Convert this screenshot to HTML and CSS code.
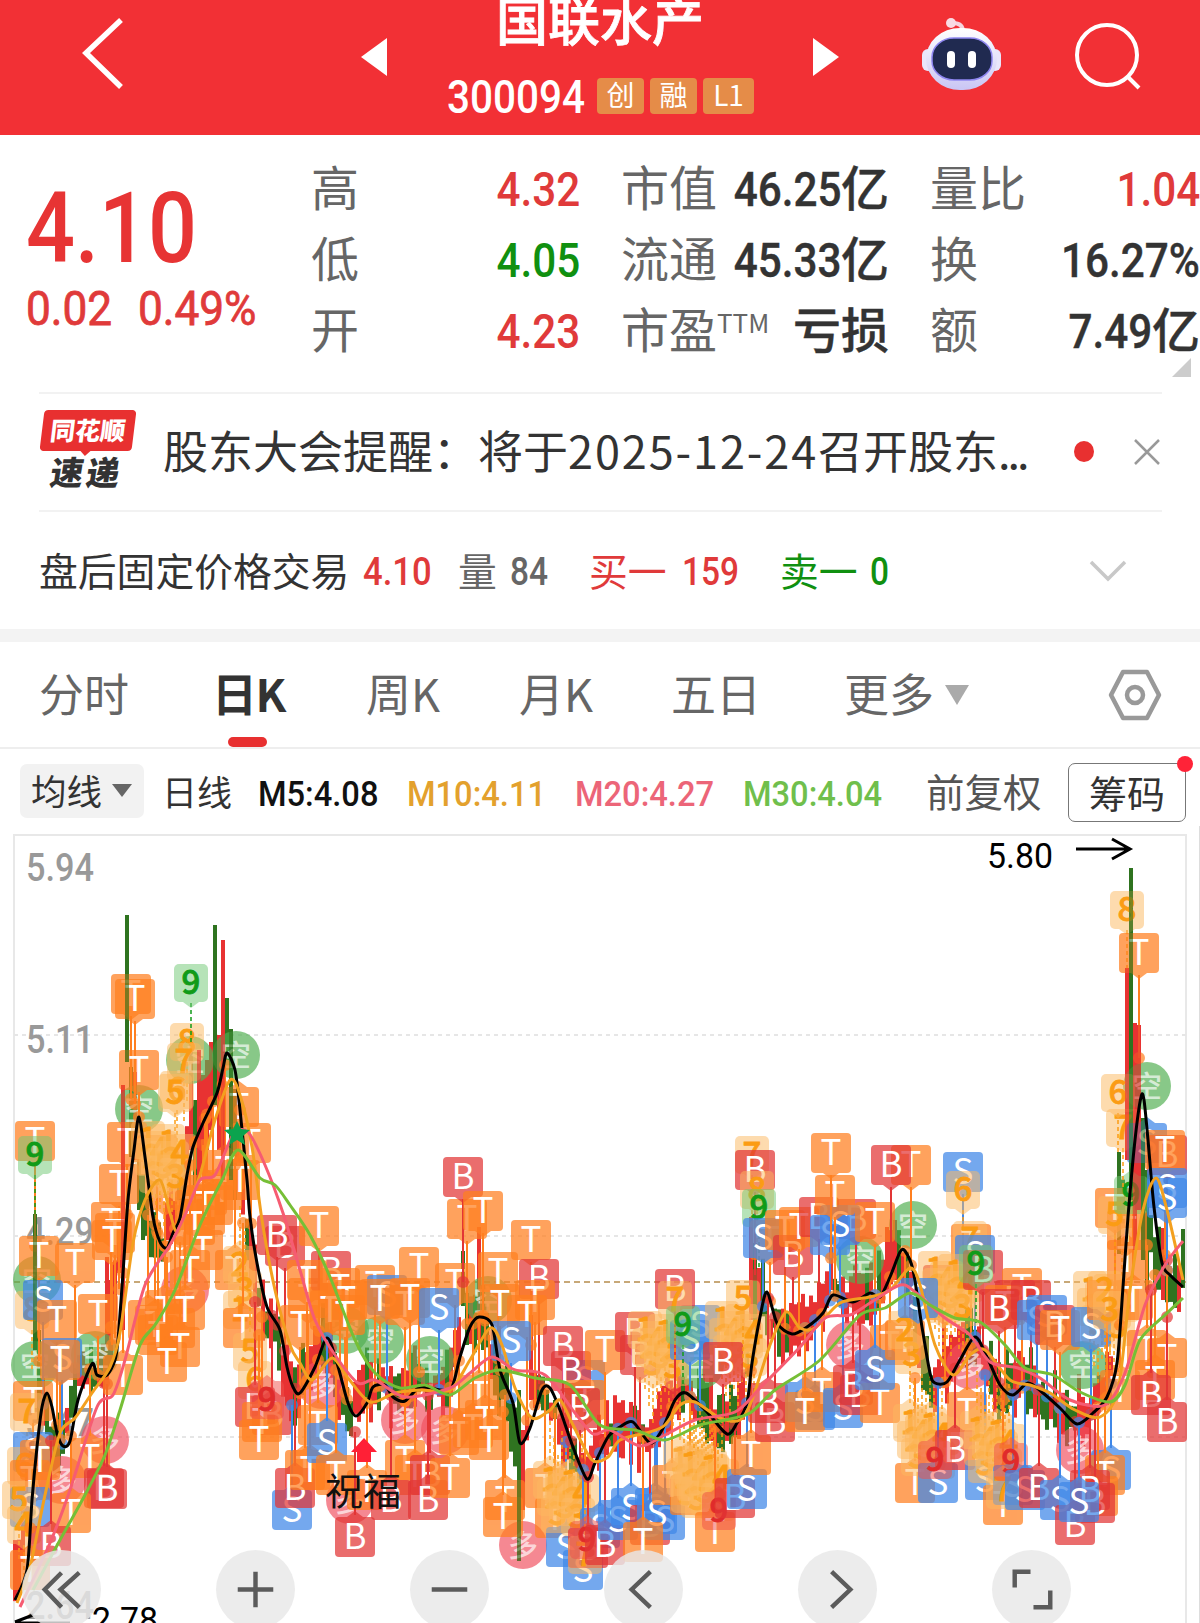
FILE: index.html
```html
<!DOCTYPE html>
<html lang="zh-CN">
<head>
    <meta charset="UTF-8">
    <meta name="viewport" content="width=device-width, initial-scale=1.0">
    <title>国联水产 300094</title>
    <link rel="stylesheet" href="styles.css">
</head>
<body>

    <header class="header">
        <svg class="back" width="44" height="76" viewBox="0 0 44 76"><path d="M40 4 L5 37 L40 71" fill="none" stroke="#fff" stroke-width="5.500"/></svg>
        <svg class="prev" width="26" height="38" viewBox="0 0 26 38"><path d="M26 0 V38 L0 19 Z" fill="#fff"/></svg>
        <div class="title">
            <h1>国联水产</h1>
            <div class="code">
                <span class="num">300094</span>
                <b>创</b><b>融</b><b class="level">L1</b>
            </div>
        </div>
        <svg class="next" width="26" height="38" viewBox="0 0 26 38"><path d="M0 0 V38 L26 19 Z" fill="#fff"/></svg>
        <svg class="robot" width="80" height="76" viewBox="0 0 80 76">
            <defs>
                <linearGradient id="shell" x1="0" y1="0" x2="0" y2="1">
                    <stop offset="0" stop-color="#fff"/>
                    <stop offset="1" stop-color="#c9c5f4"/>
                </linearGradient>
            </defs>
            <path d="M41 16 Q41 7 31 7" fill="none" stroke="#f6d5df" stroke-width="4"/>
            <circle cx="29" cy="7" r="5" fill="#f9dbe4"/>
            <rect x="0" y="33" width="12" height="22" rx="6" fill="#e9e6fb"/>
            <rect x="67" y="33" width="12" height="22" rx="6" fill="#e9e6fb"/>
            <rect x="4" y="12" width="71" height="62" rx="34" ry="31" fill="url(#shell)"/>
            <rect x="10" y="22" width="60" height="42" rx="22" ry="19" fill="#202a50" stroke="#8e86f0" stroke-width="1.500"/>
            <rect x="25" y="35" width="8" height="17" rx="4" fill="#fff"/>
            <rect x="46" y="35" width="8" height="17" rx="4" fill="#fff"/>
        </svg>
        <svg class="search" width="70" height="70" viewBox="0 0 70 70"><g fill="none" stroke="#fff" stroke-width="4"><circle cx="34" cy="34" r="30"/><path d="M54 55 L66 67"/></g></svg>
    </header>

    <section class="quote">
        <div class="price">
            <div class="last num">4.10</div>
            <div class="change"><span class="num">0.02</span><span class="num">0.49%</span></div>
        </div>
        <dl class="stats">
            <div><dt>高</dt><dd class="up"><span class="num">4.32</span></dd></div>
            <div><dt>市值</dt><dd><span class="num">46.25</span>亿</dd></div>
            <div><dt>量比</dt><dd class="up"><span class="num">1.04</span></dd></div>
            <div><dt>低</dt><dd class="down"><span class="num">4.05</span></dd></div>
            <div><dt>流通</dt><dd><span class="num">45.33</span>亿</dd></div>
            <div><dt>换</dt><dd><span class="num">16.27%</span></dd></div>
            <div><dt>开</dt><dd class="up"><span class="num">4.23</span></dd></div>
            <div><dt>市盈<sup>TTM</sup></dt><dd>亏损</dd></div>
            <div><dt>额</dt><dd><span class="num">7.49</span>亿</dd></div>
        </dl>
        <i class="corner"></i>
    </section>

    <section class="news">
        <div class="brand"><span>同花顺</span><em>速递</em></div>
        <p>股东大会提醒：将于<span class="date">2025-12-24</span>召开股东<span class="dots">...</span></p>
        <i class="dot"></i>
        <svg width="26" height="26" viewBox="0 0 26 26"><path d="M1 1 L25 25 M25 1 L1 25" stroke="#999" stroke-width="2.500"/></svg>
    </section>

    <section class="after">
        <span class="name">盘后固定价格交易</span>
        <span class="num up p">4.10</span>
        <span class="gray vol">量</span><span class="num gray volnum">84</span>
        <span class="up buy">买一</span><span class="num up buynum">159</span>
        <span class="down sell">卖一</span><span class="num down">0</span>
        <svg width="38" height="22" viewBox="0 0 38 22"><path d="M2 2 L19 19 L36 2" fill="none" stroke="#c8c8c8" stroke-width="3.500"/></svg>
    </section>

    <nav class="tabs">
        <a>分时</a>
        <a class="active">日K</a>
        <a>周K</a>
        <a>月K</a>
        <a>五日</a>
        <a>更多</a>
        <i class="caret"></i>
        <svg width="54" height="52" viewBox="0 0 54 52"><g fill="none" stroke="#999" stroke-width="4.500" stroke-linejoin="round"><path d="M15 3 H39 L51 26 L39 49 H15 L3 26 Z"/><circle cx="27" cy="26" r="8"/></g></svg>
    </nav>

    <section class="legend">
        <span class="picker"><span>均线</span><i></i></span>
        <span class="line">日线</span>
        <span class="num ma ma5">M5:4.08</span>
        <span class="num ma ma10">M10:4.11</span>
        <span class="num ma ma20">M20:4.27</span>
        <span class="num ma ma30">M30:4.04</span>
        <span class="adjust">前复权</span>
        <span class="chips">筹码<i></i></span>
    </section>

    <section class="chart">
        <svg id="kline" width="1200" height="797" viewBox="0 826 1200 797"></svg>
        <div class="controls">
            <button><svg viewBox="0 0 80 80"><path d="M40 23 L23 40 L40 58 M58 23 L39 40 L58 58"/></svg></button>
            <button><svg viewBox="0 0 80 80"><path d="M22 40 H58 M40 22 V58"/></svg></button>
            <button><svg viewBox="0 0 80 80"><path d="M22 40 H58"/></svg></button>
            <button><svg viewBox="0 0 80 80"><path d="M47 22 L28 40 L47 58"/></svg></button>
            <button><svg viewBox="0 0 80 80"><path d="M34 22 L53 40 L34 58"/></svg></button>
            <button><svg viewBox="0 0 80 80"><path d="M23 38 V22 H39 M42 58 H59 V41"/></svg></button>
        </div>
    </section>

    <script src="chart.js"></script>
</body>
</html>
```
FILE: styles.css
```css
* {
    box-sizing: border-box;
}

body {
    margin: 0;
    width: 1200px;
    height: 1623px;
    overflow: hidden;
    background: #fff;
    color: #333;
    font-family: "Noto Sans CJK SC", sans-serif;
}

svg {
    display: block;
    flex: none;
}

/* narrow figures */
.num {
    display: inline-block;
    font-family: Roboto, "Noto Sans CJK SC", sans-serif;
    font-weight: 500;
    transform: scaleX(0.88);
    transform-origin: left center;
    white-space: nowrap;
}

.up { color: #e03a3a; }
.down { color: #109010; }
.gray { color: #666; }

.header {
    width: 1200px;
    height: 135px;
    background: #f23035;
    display: flex;
    align-items: flex-start;
    color: #fff;
}

.back { margin: 16px 0 0 81px; }
.prev { margin: 38px 0 0 236px; }

.title {
    width: 426px;
    padding-left: 60px;
}

.title h1 {
    margin: -10px 0 0 49px;
    font-size: 52px;
    line-height: 58px;
    font-weight: 500;
    -webkit-text-stroke: 0.8px;
    white-space: nowrap;
}

.code {
    display: flex;
    align-items: center;
    gap: 6px;
    margin-top: 28px;
    height: 40px;
}

.code .num {
    width: 144px;
    padding-top: 2px;
    font-size: 46px;
}

.code b {
    width: 47px;
    height: 36px;
    border-radius: 4px;
    background: #e58c48;
    font-size: 28px;
    line-height: 33px;
    font-weight: 400;
    text-align: center;
}

.code .level { width: 51px; }
.next { margin: 38px 0 0 0; }
.robot { margin: 16px 0 0 83px; }
.search { margin: 21px 0 0 71px; }

.quote {
    position: relative;
    display: flex;
    height: 257px;
}

.price {
    width: 311px;
    padding: 36px 0 0 26px;
    color: #e73434;
}

.last {
    font-size: 98px;
    line-height: 116px;
}

.change {
    display: flex;
    margin-top: -6px;
    font-size: 48px;
    line-height: 56px;
    color: #e03a3a;
}

.change .num {
    width: 112px;
    font-weight: 400;
    -webkit-text-stroke: 0.8px;
    transform: scaleX(0.92);
}

.stats {
    display: grid;
    grid-template-columns: 269px 268px 270px;
    grid-auto-rows: 71px;
    column-gap: 41px;
    margin: 16px 0 0;
    font-size: 48px;
    line-height: 71px;
}

.stats div {
    display: flex;
    justify-content: space-between;
    white-space: nowrap;
}

.stats dt { margin-top: -1px; color: #666; }
.stats dd { margin: -1px 0 0; font-weight: 500; }
.stats dd:not(.up):not(.down) { -webkit-text-stroke: 0.4px; }
.stats .num { transform-origin: right center; }

.stats sup {
    font-size: 26px;
    line-height: 0;
    vertical-align: 15px;
}

.corner {
    position: absolute;
    right: 9px;
    top: 223px;
    border-left: 19px solid transparent;
    border-bottom: 19px solid #ccc;
}

.news {
    display: flex;
    align-items: center;
    margin: 0 38px 0 39px;
    height: 120px;
    border-top: 2px solid #f2f2f2;
    border-bottom: 2px solid #f2f2f2;
}

.brand {
    width: 125px;
    margin-top: -3px;
    font-weight: 900;
}

.brand span {
    position: relative;
    display: block;
    width: 92px;
    height: 41px;
    margin-left: 3px;
    background: #e83030;
    border-radius: 4px;
    color: #fff;
    font-size: 25px;
    line-height: 38px;
    text-align: center;
    transform: skewX(-7deg);
}

.brand span::after {
    content: "";
    position: absolute;
    left: 40px;
    top: 40px;
    border: 6px solid transparent;
    border-top-color: #e83030;
}

.brand em {
    display: block;
    margin-left: 12px;
    font-size: 33px;
    line-height: 40px;
    letter-spacing: 3px;
    font-style: normal;
    transform: skewX(-9deg);
}

.news p {
    width: 911px;
    margin: -5px 0 0 -1px;
    font-size: 45px;
    white-space: nowrap;
}

.date { letter-spacing: 1.900px; }
.dots { letter-spacing: -3px; }

.dot {
    width: 20px;
    height: 21px;
    margin: -1px 40px 0 0;
    border-radius: 50%;
    background: #e83030;
}

.after {
    display: flex;
    align-items: center;
    height: 117px;
    padding-left: 39px;
    font-size: 38.800px;
    white-space: nowrap;
}

.after > span:not(.num) { margin-top: -4px; }
.after .num { margin-top: 2px; font-size: 38px; }
.name { width: 324px; }
.after .p { width: 95px; transform: scaleX(0.91); }
.vol { width: 52px; }
.after .volnum { width: 79px; }
.buy { width: 93px; }
.after .buynum { width: 98px; }
.sell { width: 90px; }
.after svg { margin-left: 197px; }

.tabs {
    display: flex;
    align-items: center;
    width: 1200px;
    height: 120px;
    border-top: 13px solid #f3f3f3;
    border-bottom: 2px solid #eee;
    padding-left: 39px;
    font-size: 45px;
    color: #666;
    white-space: nowrap;
}

.tabs a { width: 173px; height: 105px; line-height: 101px; }
.tabs a:nth-child(2) { width: 154px; }
.tabs a:nth-child(3) { width: 153px; }
.tabs a:nth-child(4) { width: 152px; }
.tabs a:nth-child(6) { width: 101px; }

.tabs .active {
    position: relative;
    color: #333;
    font-weight: 700;
    letter-spacing: -1.500px;
}

.active::after {
    content: "";
    position: absolute;
    left: 16px;
    bottom: 0;
    width: 39px;
    height: 10px;
    border-radius: 5px;
    background: #e83030;
}

.caret {
    border: 12px solid transparent;
    border-top: 20px solid #aaa;
    border-bottom: 0;
}

.tabs svg { margin-left: 139px; }

.legend {
    display: flex;
    align-items: center;
    height: 77px;
    padding: 6px 0 0 20px;
    white-space: nowrap;
}

.picker {
    display: flex;
    align-items: center;
    width: 124px;
    height: 54px;
    margin-right: 18px;
    padding-left: 11px;
    border-radius: 7px;
    background: #f2f2f2;
    font-size: 35.500px;
}

.picker span { margin-top: -3px; }

.picker i {
    margin-left: 10px;
    border: 10px solid transparent;
    border-top: 13px solid #666;
    border-bottom: 0;
}

.line { width: 96px; font-size: 35px; }
.legend .ma { margin-top: 7px; font-size: 35.500px; transform: scaleX(0.92); }
.ma5 { width: 149px; color: #111; }
.ma10 { width: 168px; color: #e3a12d; }
.ma20 { width: 168px; color: #ec6578; }
.ma30 { width: 183px; color: #70bf4c; }
.adjust { width: 142px; margin-top: -2px; font-size: 38.500px; color: #555; }

.chips {
    position: relative;
    width: 118px;
    height: 59px;
    margin-top: 3px;
    border: 1.500px solid #777;
    border-radius: 7px;
    font-size: 38px;
    line-height: 55px;
    text-align: center;
}

.chips i {
    position: absolute;
    right: -8px;
    top: -8px;
    width: 16px;
    height: 16px;
    border-radius: 50%;
    background: #ff2338;
}

.chart {
    position: relative;
    width: 1200px;
    height: 797px;
}

.controls {
    position: absolute;
    left: 22px;
    top: 724px;
    display: flex;
    gap: 115px;
}

.controls button {
    width: 79px;
    height: 79px;
    padding: 0;
    border: 0;
    border-radius: 50%;
    background: rgba(232, 232, 232, 0.82);
}

.controls path {
    fill: none;
    stroke: #5b5b5b;
    stroke-width: 4.500;
}

.axis { font: 500 39px Roboto, sans-serif; fill: #999; }
.peak { font: 400 35px Roboto, sans-serif; fill: #000; }
.mark { font: 400 35px "Noto Sans CJK SC", sans-serif; text-anchor: middle; }
.nine { font: 500 33px "Noto Sans CJK SC", sans-serif; text-anchor: middle; stroke-width: 0.8; }
.round { font: 500 30px "Noto Sans CJK SC", sans-serif; text-anchor: middle; }
.bless { font: 400 38px "Noto Sans CJK SC", sans-serif; fill: #111; }
```
FILE: chart.js
```js
// moving averages: x,y pairs
const MA5 = "15,1600 27,1570 32,1500 37,1447 42,1407 47,1393 52,1407 57,1433 63,1446 70,1441 78,1400 92,1364 97,1375 107,1375 115,1360 118,1340 123,1273 128,1200 134,1150 139,1117 145,1157 153,1217 160,1242 167,1248 173,1233 180,1218 187,1175 193,1147 203,1123 217,1093 223,1068 227,1053 235,1070 240,1110 247,1180 250,1217 257,1263 267,1307 280,1330 287,1367 293,1387 300,1393 315,1367 327,1338 337,1363 348,1403 356,1416 367,1403 373,1387 385,1385 393,1397 405,1401 420,1387 440,1390 452,1387 460,1357 470,1327 479,1317 492,1325 500,1370 513,1403 520,1443 530,1428 542,1390 550,1388 560,1410 573,1447 587,1479 595,1463 608,1437 620,1427 633,1422 650,1443 662,1430 675,1400 686,1393 707,1412 727,1434 737,1423 747,1403 752,1363 760,1317 767,1292 777,1323 792,1334 807,1327 823,1313 833,1295 853,1302 870,1293 880,1297 890,1277 900,1252 905,1251 913,1270 922,1327 930,1373 935,1383 947,1382 960,1360 975,1337 987,1357 1000,1385 1013,1395 1028,1383 1043,1393 1060,1408 1077,1424 1093,1413 1107,1397 1117,1363 1123,1287 1128,1217 1135,1140 1141,1097 1144,1100 1148,1140 1154,1207 1162,1263 1170,1275 1183,1287";
const MA10 = "17,1603 30,1567 45,1495 60,1433 75,1418 92,1393 110,1367 120,1333 133,1243 145,1200 160,1180 170,1213 177,1232 187,1210 200,1175 215,1120 230,1080 240,1095 252,1147 262,1220 275,1290 290,1345 300,1363 312,1380 332,1358 348,1378 370,1402 395,1393 420,1390 450,1390 470,1360 490,1328 502,1345 515,1388 532,1418 550,1410 560,1400 573,1425 592,1460 608,1457 620,1440 650,1432 665,1425 680,1405 695,1402 720,1418 740,1420 752,1400 770,1345 786,1312 800,1328 815,1328 840,1303 870,1297 890,1290 910,1268 920,1285 935,1345 953,1375 970,1355 985,1350 1010,1380 1030,1385 1050,1393 1075,1410 1100,1417 1118,1390 1130,1290 1143,1210 1156,1178 1167,1210 1183,1280";
const MA20 = "20,1607 50,1543 70,1490 97,1407 113,1395 125,1360 145,1285 170,1245 185,1215 200,1180 215,1175 233,1135 248,1132 265,1165 283,1213 300,1270 315,1320 335,1355 358,1383 375,1380 405,1397 450,1388 470,1373 492,1357 515,1370 545,1375 575,1413 593,1434 610,1430 640,1446 665,1435 695,1420 735,1412 760,1388 800,1347 825,1318 850,1315 870,1303 900,1285 915,1292 945,1318 970,1335 990,1362 1018,1368 1040,1378 1070,1400 1105,1405 1125,1373 1145,1305 1165,1265 1183,1241";
const MA30 = "33,1590 60,1540 85,1495 105,1455 120,1410 140,1345 155,1325 175,1290 200,1225 222,1180 238,1150 260,1178 275,1185 290,1205 310,1235 330,1277 355,1340 375,1373 400,1388 425,1385 450,1395 475,1378 500,1370 535,1378 570,1385 600,1425 635,1430 665,1440 700,1425 725,1420 750,1413 775,1390 820,1360 860,1315 885,1308 910,1293 930,1305 955,1318 980,1322 1005,1345 1025,1368 1053,1375 1080,1392 1110,1402 1125,1385 1140,1340 1165,1315 1183,1298";

// outstanding candles: x, top, bottom, colour
const SPIKES = [
    [35, 1214, 1350, "g"], [39, 1330, 1420, "g"], [107, 1257, 1380, "r"], [111, 1280, 1370, "r"],
    [123, 1085, 1330, "r"], [131, 1067, 1157, "g"], [135, 1072, 1160, "r"], [139, 1143, 1210, "g"], [143, 1174, 1240, "g"], [127, 915, 1062, "g"],
    [191, 1045, 1150, "r"], [195, 1100, 1200, "g"], [199, 1050, 1180, "r"], [203, 1075, 1170, "r"], [207, 1060, 1150, "r"], [211, 1042, 1130, "r"], [219, 1035, 1150, "r"], [223, 940, 1180, "r"],
    [227, 998, 1060, "g"], [231, 1029, 1180, "g"], [235, 1089, 1200, "g"], [215, 925, 1105, "g"],
    [463, 1251, 1306, "g"], [479, 1227, 1340, "r"], [483, 1285, 1350, "g"], [467, 1293, 1345, "g"], [519, 1390, 1561, "g"], [523, 1430, 1510, "r"], [531, 1315, 1400, "r"],
    [751, 1217, 1320, "r"], [755, 1243, 1330, "g"], [759, 1268, 1330, "r"], [831, 1225, 1290, "r"], [887, 1227, 1290, "r"], [895, 1220, 1280, "r"],
    [1119, 1152, 1254, "g"], [1127, 968, 1160, "r"], [1135, 1023, 1250, "r"], [1139, 1025, 1210, "r"], [1143, 1118, 1260, "g"], [1147, 1170, 1290, "g"], [1131, 868, 1200, "g"], [1163, 1228, 1300, "r"], [1183, 1229, 1288, "g"]
];

// signal tags: T/B/S boxes, digits are the nine-turn count (gg/rr = finished), c is a pile of counts, k/d are the round ones
const MARKS = `k190,1060 k139,1109 k236,1055 k37,1280 k35,1365 d105,1440 d62,1480 d185,1290 k95,1355 k380,1340 k430,1360 k488,1300 k345,1330
d322,1385 d405,1420 d445,1430 d350,1500 k700,1365 k860,1260 d850,1345 k913,1225 d970,1365 k1083,1365 d1080,1450 k1147,1086 d523,1545
T35,1141 gg35,1155 T131,994 T135,999 T139,1070 T127,1142 T119,1184 T111,1222 T115,1233 T112,1240 n8:187,1042 n7:184,1062 n6:177,1090 n5:175,1093 gg191,983 T239,1107 T251,1143
T157,1155 T165,1190 c163,1160 T205,1215 T207,1195 T195,1210 T213,1205 T222,1190 T225,1170 T205,1205 T240,1180
T39,1256 T75,1263 n8:32,1310 S43,1300 T57,1320 T98,1314 S62,1358 T60,1360 T33,1401 n7:27,1412 S33,1452 n6:24,1466 T30,1480 S30,1507 n5:19,1500 n4:24,1525 T40,1460 T90,1458 B104,1488 B107,1489 T71,1513 B51,1546 T30,1570
T123,1375 T148,1320 T155,1325 T175,1328 T158,1335 T180,1347 T165,1310 T167,1362 T195,1225 T203,1250 T190,1270 T185,1310
T235,1270 n2:240,1265 n3:245,1290 n1:240,1310 T243,1328 n5:250,1352 n6:255,1380 B255,1407 B272,1415 T262,1422 T259,1440 rr267,1400 B285,1246 B277,1235 T308,1298 T300,1325 T305,1470 S292,1510 B295,1488
T319,1226 B331,1271 T307,1280 T340,1288 T347,1300 T330,1310 T375,1285 S387,1295 T380,1299 T345,1315 T405,1305 T419,1267 T410,1298 T455,1283 S439,1308 T467,1219 B463,1177 T483,1211 T531,1240 T498,1272 T500,1304 B539,1279 T535,1300 T527,1315 S511,1341
T318,1425 T310,1470 S327,1443 T336,1475 T367,1490 T405,1460 T415,1475 B430,1475 B428,1500 B391,1500 B355,1537 T450,1478 T479,1395 T459,1435 T473,1428 T485,1420 T489,1440 T505,1500 T503,1517
T545,1488 T555,1518 S566,1547 c565,1500 B563,1346 S585,1380 B571,1371 T585,1400 B580,1408 T605,1350 S583,1570 S600,1528 B588,1548 n7:585,1555 rr587,1540
B635,1332 B640,1355 c660,1350 S700,1325 S690,1340 B675,1289 n7:675,1300 gg683,1325 c737,1340 B723,1362 n5:743,1299
B605,1545 S618,1520 S631,1508 S655,1508 B650,1525 S665,1520 S657,1514 T672,1485 T643,1542 T690,1495 c695,1480 c705,1485 T715,1532 rr719,1511 B735,1498 S747,1489 T751,1455
n7:752,1155 B755,1170 n8:757,1190 gg759,1208 T770,1240 S763,1238 T785,1230 B793,1255 T799,1227 B819,1217 B856,1219 S830,1235 S840,1225 T875,1222 T835,1195 T831,1153 T911,1165 B891,1165
B775,1422 B768,1403 S815,1410 S805,1402 T822,1392 T805,1412 S843,1408 B860,1395 B853,1385 T880,1403 T890,1345 S875,1370 T905,1340 n3:912,1355 n2:905,1330
S963,1172 n6:963,1190 T971,1244 n7:970,1240 S975,1255 B943,1285 T945,1300 c950,1290 S918,1298 B983,1270 gg976,1264 T1022,1288 B1015,1300 T1005,1305 B1031,1300 B999,1309 S1037,1320 S1047,1315 B1055,1325 T1060,1330 c1105,1310 S1091,1327
T967,1412 T915,1483 c925,1443 S938,1483 B955,1450 rr935,1460 S985,1480 c992,1450 T1003,1505 S1013,1485 n7:1003,1490 rr1011,1462 S1025,1490 B1039,1488 S1060,1500 B1075,1525 S1111,1470 T1105,1475 T1098,1496 B1095,1503 B1090,1490 S1079,1502
T1107,1300 T1133,1300 T1127,1260 T1127,1230 T1115,1208 n2:1105,1290 n3:1110,1310 n5:1115,1215 gg1131,1195 n7:1123,1128 n6:1118,1093 n8:1127,910 T1139,953 S1147,1143 B1167,1155 T1165,1150 S1167,1188 S1167,1198 T1120,1390 T1147,1350 T1167,1358 T1155,1380 B1151,1395 B1167,1422`;

const COLORS = { T: "#ff7f1f", B: "#e23535", S: "#3f87e8" };
const toPoints = s => s.split(" ").map(p => p.split(",").map(Number));
const points = toPoints(MA5);

function priceAt(x) {
    for (let i = 1; i < points.length; i++) {
        const [x0, y0] = points[i - 1], [x1, y1] = points[i];
        if (x <= x1) return y0 + (y1 - y0) * (x - x0) / (x1 - x0);
    }
    return 1287;
}

// rounded line through all the points
function curve(pts) {
    let d = `M${pts[0]}`;
    for (let i = 0; i < pts.length - 1; i++) {
        const a = pts[i - 1] || pts[i], b = pts[i], c = pts[i + 1], e = pts[i + 2] || c;
        d += ` C${b[0] + (c[0] - a[0]) / 7} ${b[1] + (c[1] - a[1]) / 7} ${c[0] - (e[0] - b[0]) / 7} ${c[1] - (e[1] - b[1]) / 7} ${c}`;
    }
    return d;
}

let seed = 7;
function rnd() {
    seed = (seed * 16807) % 2147483647;
    return seed / 2147483647;
}

function bar(x, top, bottom, c) {
    return `<rect x="${x - 2}" y="${top}" width="4" height="${bottom - top}" fill="${c === "r" ? "#e83232" : "#2f7320"}"/>`;
}

let out = "";

// frame and grid
out += `<path d="M14 1623 V835 H1186 V1623" fill="none" stroke="#e8e8e8" stroke-width="2"/>`;
out += `<path d="M1199.5 826 V1623" stroke="#ddd"/>`;
[1035, 1236, 1437].forEach(y => {
    out += `<path d="M14 ${y} H1186" stroke="#e6e6e6" stroke-width="2" stroke-dasharray="4 4"/>`;
});
out += `<path d="M14 1282 H1186" stroke="#c7a878" stroke-width="2" stroke-dasharray="6 4"/>`;
[["5.94", 881], ["5.11", 1053], ["4.29", 1245], ["3.47", 1436], ["2.64", 1619]].forEach(([t, y]) => {
    out += `<text class="axis" x="26" y="${y}" textLength="68" lengthAdjust="spacingAndGlyphs">${t}</text>`;
});

// candles
for (let x = 15; x < 1186; x += 4) {
    if (SPIKES.some(s => s[0] === x)) continue;
    const y = priceAt(x + 6) + (rnd() - 0.5) * 22;
    const h = 10 + rnd() * 26;
    const rising = priceAt(x + 10) < priceAt(x);
    out += bar(x, y - h, y + h * 0.8, rnd() < (rising ? 0.8 : 0.3) ? "r" : "g");
}
SPIKES.forEach(s => out += bar(...s));

// tags
const tags = [];
MARKS.split(/\s+/).forEach(m => {
    const r = m.match(/^(n\d:|[a-zA-Z]+)(\d+),(\d+)$/);
    const x = +r[2], y = +r[3];
    if (r[1] !== "c") {
        tags.push({ kind: r[1], x, y });
        return;
    }
    for (let i = 0; i < 9; i++) {
        tags.push({ kind: "n" + (1 + i % 5) + ":", x: x - 15 + i * 4, y: y - 20 + (i * 17) % 41 });
    }
});

tags.forEach(({ kind, x, y }) => {
    const color = COLORS[kind];
    const p = priceAt(x);
    const dir = y < p ? 1 : -1;
    if (color) {
        const end = y + dir * Math.min(Math.abs(p - y), 105);
        if (Math.abs(p - y) > 40) {
            out += `<path d="M${x} ${y + dir * 22} V${end}" stroke="${color}" stroke-width="2"/>`;
            out += `<circle cx="${x}" cy="${end}" r="6" fill="${color}" opacity=".7"/>`;
        }
        out += `<g opacity=".72" fill="${color}"><rect x="${x - 20}" y="${y - 20}" width="40" height="40" rx="4"/><path d="M${x - 8} ${y + dir * 20} h16 l-8 ${dir * 6} z"/></g>`;
        out += `<text class="mark" x="${x}" y="${y + 12}" fill="#fff">${kind}</text>`;
    } else if (kind === "k" || kind === "d") {
        out += `<circle cx="${x}" cy="${y}" r="24" fill="${kind === "k" ? "#4fae4f" : "#f0505e"}" opacity=".68"/>`;
        out += `<text class="round" x="${x}" y="${y + 11}" fill="#fff" opacity=".65">${kind === "k" ? "空" : "多"}</text>`;
    } else {
        const done = kind === "gg" ? "#109b18" : kind === "rr" ? "#e02b2b" : "#fb9c14";
        const back = kind === "gg" ? "#6fc873" : kind === "rr" ? "#f0504a" : "#fdb860";
        if (kind[0] === "n" || kind === "gg") {
            out += `<path d="M${x} ${y + dir * 20} V${y + dir * 60}" stroke="${done}" stroke-width="1.5" stroke-dasharray="4 3"/>`;
        }
        out += `<g opacity=".5" fill="${back}"><rect x="${x - 17}" y="${y - 19}" width="34" height="38" rx="5"/><path d="M${x - 8} ${y + dir * 19} h16 l-8 ${dir * 6} z"/></g>`;
        out += `<text class="nine" x="${x}" y="${y + 11}" fill="${done}" stroke="${done}">${kind[0] === "n" ? kind[1] : "9"}</text>`;
    }
});

// tall shadows stay readable over the tags
SPIKES.filter(s => s[2] - s[1] > 125).forEach(s => out += `<g opacity=".6">${bar(...s)}</g>`);

[[MA5, "#000"], [MA10, "#f3a01f"], [MA20, "#f65c72"], [MA30, "#76bf36"]].forEach(([p, c]) => {
    out += `<path d="${curve(toPoints(p))}" fill="none" stroke="${c}" stroke-width="3" stroke-linejoin="round"/>`;
});

out += `<path d="M237 1121 l4 8 9 1 -7 6 2 9 -8 -5 -8 5 2 -9 -7 -6 9 -1 z" fill="#0ba34e"/>`;
out += `<path d="M364 1438 l13 14 h-6 v10 h-14 v-10 h-6 z" fill="#ff2036"/>`;
out += `<text class="bless" x="325" y="1505">祝福</text>`;
out += `<text class="peak" x="987" y="868" textLength="66" lengthAdjust="spacingAndGlyphs">5.80</text>`;
out += `<path d="M1076 849 H1130 M1112 839 L1130 849 L1112 859" fill="none" stroke="#000" stroke-width="3"/>`;
out += `<text class="peak" x="92" y="1632" textLength="66" lengthAdjust="spacingAndGlyphs">2.78</text>`;
out += `<path d="M15 1623 H70 M15 1622 L33 1615" fill="none" stroke="#000" stroke-width="3"/>`;

document.getElementById("kline").innerHTML = out;
```
